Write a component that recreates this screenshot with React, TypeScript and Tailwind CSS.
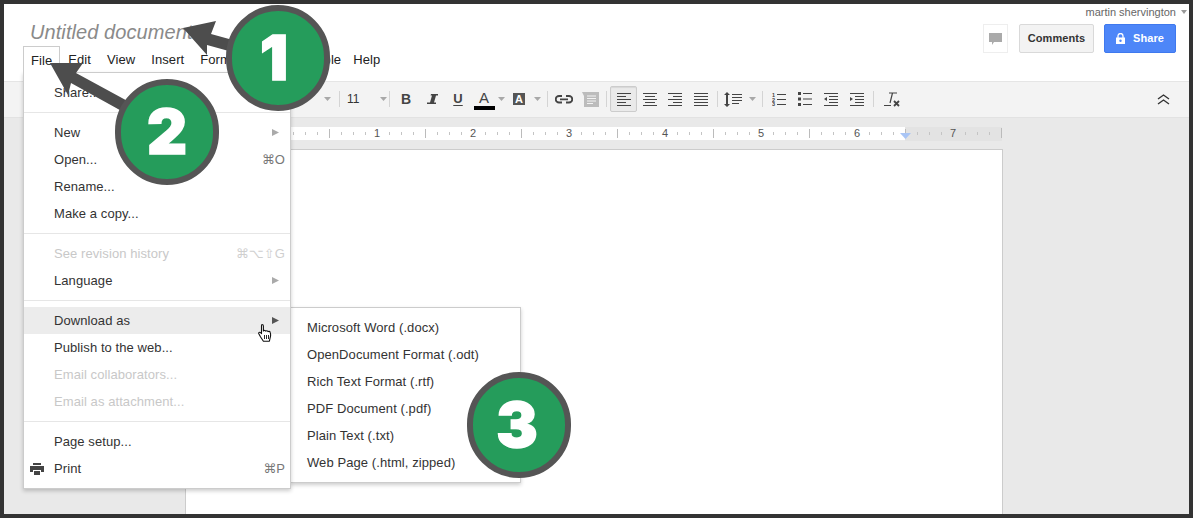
import React from "react";

const Caret = ({ w = 10, c = "#a8a8a8" }: { w?: number; c?: string }) => (
  <div className="flex items-center justify-center" style={{ width: w }}>
    <svg width="7" height="4" viewBox="0 0 7 4"><path d="M0 0h7L3.5 4z" fill={c} /></svg>
  </div>
);
const Sep = ({ className = "" }: { className?: string }) => <div className={`w-px h-[16px] bg-[#d4d4d4] shrink-0 ${className}`} />;
const Btn = ({ children, w = 26 }: { children: React.ReactNode; w?: number }) => (
  <div className="h-[26px] flex items-center justify-center shrink-0 text-[#444]" style={{ width: w }}>{children}</div>
);
const Lines = ({ rows }: { rows: [number, number][] }) => (
  <svg width="14" height="14" viewBox="0 0 14 14">
    {rows.map(([x, w], i) => <rect key={i} x={x} y={1 + i * 3} width={w} height="1" fill="#444" />)}
  </svg>
);

const Tri = ({ dark }: { dark?: boolean }) => (
  <svg width="7" height="7" viewBox="0 0 7 7" className="absolute left-[248px] top-[10px]">
    <path d="M0 0l7 3.5L0 7z" fill={dark ? "#555" : "#aaa"} />
  </svg>
);

const Row = ({ label, sc, arrow, off, hl, icon }: { label: string; sc?: string; arrow?: boolean; off?: boolean; hl?: boolean; icon?: React.ReactNode }) => (
  <div className={`relative h-[27px] flex items-center pl-[30px] pr-[5px] justify-between ${hl ? "bg-[#ececec]" : ""} ${off ? "text-[#c8c8c8]" : "text-[#333]"}`}>
    {icon}
    <span>{label}</span>
    {sc && <span className={off ? "text-[#cfcfcf]" : "text-[#777]"}>{sc}</span>}
    {arrow && <Tri dark={hl} />}
  </div>
);
const Div = () => <div className="h-px my-[6px] bg-[#e6e6e6]" />;

const Badge = ({ n, cls, inner }: { n: string; cls: string; inner: string }) => (
  <div className={`absolute z-30 w-[104px] h-[106px] rounded-full border-[6px] border-[#555] bg-[#259c5b] flex items-center justify-center text-white font-['Inter','Liberation_Sans',sans-serif] font-black text-[62px] leading-none [-webkit-text-stroke:1.5px_white] ${cls}`}>
    <span className={inner}>{n}</span>
  </div>
);

const ticks = Array.from({ length: 69 }, (_, i) => i);

export default function App() {
  return (
    <div className="relative w-[1193px] h-[518px] bg-[#333] p-[4px] overflow-hidden font-['Liberation_Sans','DejaVu_Sans',sans-serif] text-[13px] tracking-[0.08px]">
      <div className="h-full flex flex-col bg-white">
        {/* header */}
        <header className="h-[78px] shrink-0 flex justify-between border-b border-[#e5e5e5]">
          <div className="pl-[19px] pt-[16px]">
            <div className="ml-[7px] h-[24px] leading-[24px] text-[20px] italic text-[#8a8a8a]">Untitled document</div>
            <nav className="mt-[2px] flex text-[#222]">
              <div className="relative z-20 h-[27px] px-[7px] pt-[4px] bg-white border border-b-0 border-[#ccc]">File</div>
              <div className="h-[27px] px-[8px] pt-[4px]">Edit</div>
              <div className="h-[27px] px-[8px] pt-[4px]">View</div>
              <div className="h-[27px] px-[8px] pt-[4px]">Insert</div>
              <div className="h-[27px] px-[8px] pt-[4px]">Format</div>
              <div className="h-[27px] pl-[8px] pr-[13px] pt-[4px]">Tools</div>
              <div className="h-[27px] pl-[8px] pr-[4px] pt-[4px]">Table</div>
              <div className="h-[27px] px-[8px] pt-[4px]">Help</div>
            </nav>
          </div>
          <div className="pr-[2px] flex flex-col items-end">
            <div className="h-[16px] flex items-center gap-[5px] text-[11px] tracking-normal text-[#666]">
              <span>martin shervington</span>
              <svg width="6" height="4" viewBox="0 0 6 4"><path d="M0 0h6L3 4z" fill="#999" /></svg>
            </div>
            <div className="mt-[4px] mr-[11px] flex">
              <div className="w-[25px] h-[29px] border border-[#eee] flex items-center justify-center">
                <svg width="14" height="14" viewBox="0 0 14 14"><path d="M0 1h13v9H5l-2 3v-3H0z" fill="#aaa" /></svg>
              </div>
              <div className="ml-[11px] w-[75px] h-[29px] rounded-[2px] border border-[#d9d9d9] bg-[#f3f3f3] flex items-center justify-center text-[11px] font-bold text-[#333]">Comments</div>
              <div className="ml-[10px] w-[72px] h-[29px] rounded-[2px] bg-[#4d86f8] border border-[#3f79ee] flex items-center justify-center gap-[8px] text-[11px] font-bold text-white">
                <svg width="9" height="11" viewBox="0 0 9 11"><path d="M2 5V3a2.5 2.5 0 015 0v2" fill="none" stroke="#fff" strokeWidth="1.3" /><path d="M0 4.5h9V11H0z" fill="#fff" /><circle cx="4.5" cy="7.7" r="1.2" fill="#4d86f8" /></svg>
                <span>Share</span>
              </div>
            </div>
          </div>
        </header>

        {/* toolbar */}
        <div className="h-[36px] shrink-0 flex items-center pl-[318px] pb-[1px] bg-[#f3f3f3] border-b border-[#e2e2e2]">
          <Caret />
          <Sep className="ml-[7px]" />
          <div className="w-[49px] flex items-center justify-between pl-[7px] pr-[1px] text-[12px] text-[#333]"><span>11</span><Caret w={10} /></div>
          <Sep />
          <div className="ml-[3px] flex items-center">
            <Btn><span className="font-bold text-[14px]">B</span></Btn>
            <Btn>
              <svg width="11" height="10" viewBox="0 0 11 10"><path d="M4 0h7v1.5H9L7 8.5h2V10H0V8.5h3L5 1.5H3.6z" fill="#444" /></svg>
            </Btn>
            <Btn><span className="font-bold text-[13px] underline underline-offset-2">U</span></Btn>
            <Btn>
              <div className="flex flex-col items-center">
                <span className="text-[15px] leading-[14px] mt-[3px]">A</span>
                <div className="w-[21px] h-[4px] mt-[1px] bg-black" />
              </div>
            </Btn>
            <Caret w={9} />
            <Btn>
              <div className="w-[12px] h-[12px] bg-[#555] text-white font-bold text-[11px] leading-[12px] text-center">A</div>
            </Btn>
            <Caret />
          </div>
          <Sep className="ml-[5px]" />
          <div className="ml-[3px] flex items-center">
            <Btn>
              <svg width="18" height="9" viewBox="0 0 18 9" fill="none" stroke="#444" strokeWidth="1.8"><path d="M7 1H4a3.2 3.2 0 000 6.5h3M11 1h3a3.2 3.2 0 010 6.5h-3M5 4.3h8" /></svg>
            </Btn>
            <Btn>
              <svg width="17" height="15" viewBox="0 0 17 15"><path d="M2 0h15v15H2V4L0 0z" fill="#bcbcbc" /><path d="M5 4h9M5 6.5h9M5 9h9M5 11.5h6" stroke="#f3f3f3" strokeWidth="1" /></svg>
            </Btn>
          </div>
          <Sep className="ml-[3px]" />
          <div className="ml-[3px] w-[27px] h-[26px] rounded-[2px] border border-[#ccc] bg-[#eaeaea] shadow-[inset_0_1px_1px_rgba(0,0,0,0.08)] flex items-center justify-center shrink-0">
            <Lines rows={[[0, 14], [0, 9], [0, 14], [0, 9], [0, 14]]} />
          </div>
          <Btn w={25}><Lines rows={[[0, 14], [2, 10], [0, 14], [2, 10], [0, 14]]} /></Btn>
          <Btn><Lines rows={[[0, 14], [5, 9], [0, 14], [5, 9], [0, 14]]} /></Btn>
          <Btn><Lines rows={[[0, 14], [0, 14], [0, 14], [0, 14], [0, 14]]} /></Btn>
          <Sep className="ml-[3px]" />
          <Btn w={30}>
            <svg width="18" height="15" viewBox="0 0 18 15" fill="#444"><path d="M3 0l3 3H4v9h2l-3 3-3-3h2V3H0z" /><path d="M8 2h10v1H8zM8 5h10v1H8zM8 8h10v1H8zM8 11h7v1H8z" /></svg>
          </Btn>
          <Caret w={9} />
          <Sep className="ml-[5px]" />
          <div className="ml-[3px] flex items-center">
            <Btn>
              <svg width="14" height="14" viewBox="0 0 14 14" fill="#444"><text x="0" y="5" fontSize="5.5" fontWeight="700">1</text><text x="0" y="9.5" fontSize="5.5" fontWeight="700">2</text><text x="0" y="14" fontSize="5.5" fontWeight="700">3</text><path d="M5 2h9v1H5zM5 7h9v1H5zM5 12h9v1H5z" /></svg>
            </Btn>
            <Btn>
              <svg width="14" height="14" viewBox="0 0 14 14" fill="#444"><path d="M0 0h3v3H0zM0 5.5h3v3H0zM0 11h3v3H0zM5 1h9v1H5zM5 6.5h9v1H5zM5 12h9v1H5z" /></svg>
            </Btn>
            <Btn>
              <svg width="14" height="14" viewBox="0 0 14 14" fill="#444"><path d="M0 1h14v1H0zM5 4h9v1H5zM5 7h9v1H5zM5 10h9v1H5zM0 13h14v1H0zM3 5v4L0 7z" /></svg>
            </Btn>
            <Btn>
              <svg width="14" height="14" viewBox="0 0 14 14" fill="#444"><path d="M0 1h14v1H0zM5 4h9v1H5zM5 7h9v1H5zM5 10h9v1H5zM0 13h14v1H0zM0 5v4l3-2z" /></svg>
            </Btn>
          </div>
          <Sep className="ml-[3px]" />
          <Btn w={36}>
            <svg width="16" height="16" viewBox="0 0 16 16" fill="none" stroke="#444"><path d="M5 2h8M8.5 2L6 12M0 14.5h7" strokeWidth="1.2" /><path d="M10 10l5 5M15 10l-5 5" strokeWidth="1.8" /></svg>
          </Btn>
          <div className="ml-auto mr-[19px]">
            <svg width="13" height="11" viewBox="0 0 13 11" fill="none" stroke="#333" strokeWidth="1.4"><path d="M1 5l5.5-4L12 5M1 10l5.5-4L12 10" /></svg>
          </div>
        </div>

        {/* canvas */}
        <div className="flex-1 min-h-0 overflow-hidden bg-[#e9e9e9] pt-[9px]">
          <div className="ml-[182px] w-[816px] h-[14px]">
            <svg width="816" height="14" viewBox="0 0 816 14" className="block">
              <rect x="0" y="0" width="719" height="13" fill="#fff" />
              <rect x="719" y="-1" width="97" height="15" fill="#e3e3e3" />
              {ticks.map((i) => {
                const x = i * 12 - 1;
                const pos = i % 8;
                if (pos === 0) return null;
                if (pos === 4) return <rect key={i} x={x} y="2" width="1" height="9" fill="#bbb" />;
                return <rect key={i} x={x} y="5" width="1" height="3" fill="#c4c4c4" />;
              })}
              <rect x="815" y="1" width="1" height="9" fill="#bbb" />
              {[1, 2, 3, 4, 5, 6, 7].map((n) => (
                <text key={n} x={95 + n * 96} y="10" textAnchor="middle" fontSize="11" fill="#555" fontFamily="Liberation Sans">{n}</text>
              ))}
              <path d="M714 6h11l-5.5 6z" fill="#a9c5f5" />
            </svg>
          </div>
          <div className="ml-[181px] mt-[8px] w-[818px] h-[500px] bg-white border border-[#ccc]" />
        </div>
      </div>

      {/* file menu */}
      <div className="absolute z-10 left-[23px] top-[72px] w-[268px] bg-white border border-[#ccc] shadow-[0_2px_4px_rgba(0,0,0,0.2)] py-[6px]">
        <Row label="Share..." />
        <Div />
        <Row label="New" arrow />
        <Row label="Open..." sc="⌘O" />
        <Row label="Rename..." />
        <Row label="Make a copy..." />
        <Div />
        <Row label="See revision history" sc="⌘⌥⇧G" off />
        <Row label="Language" arrow />
        <Div />
        <Row label="Download as" arrow hl />
        <Row label="Publish to the web..." />
        <Row label="Email collaborators..." off />
        <Row label="Email as attachment..." off />
        <Div />
        <Row label="Page setup..." />
        <Row
          label="Print"
          sc="⌘P"
          icon={
            <svg width="14" height="12" viewBox="0 0 14 12" className="absolute left-[6px] top-[8px]" fill="#444">
              <path d="M3 0h8v2H3zM0 3h14v6h-3V7H3v2H0zM4 8h6v4H4z" />
            </svg>
          }
        />
      </div>

      {/* download submenu */}
      <div className="absolute z-[9] left-[290px] top-[307px] w-[231px] bg-white border border-[#ccc] shadow-[0_2px_4px_rgba(0,0,0,0.2)] py-[6px] text-[#333]">
        {["Microsoft Word (.docx)", "OpenDocument Format (.odt)", "Rich Text Format (.rtf)", "PDF Document (.pdf)", "Plain Text (.txt)", "Web Page (.html, zipped)"].map((t) => (
          <div key={t} className="h-[27px] flex items-center pl-[16px]">{t}</div>
        ))}
      </div>

      {/* pointer */}
      <svg width="16" height="20" viewBox="0 0 16 20" className="absolute z-20 left-[258px] top-[323px]">
        <path d="M4 1.5c.9 0 1.4.6 1.4 1.4V8c.3-.8 2-.8 2.3.2.5-.7 2-.6 2.3.4.6-.5 2-.3 2.2.8.5 1.6.5 4-.1 5.6l-.7 3.2H5.4L2.6 14 .8 10.8c-.5-1.2.8-2 1.8-1.1l.9.9V2.9c0-.8 0-1.4.5-1.4z" fill="#fff" stroke="#111" strokeWidth="1.1" strokeLinejoin="round" />
        <path d="M6.5 12v4M8.5 12v4M10.5 12v4" stroke="#111" strokeWidth="0.9" />
      </svg>

      {/* annotation arrows */}
      <svg width="1193" height="518" viewBox="0 0 1193 518" className="absolute z-20 left-0 top-0 pointer-events-none">
        <path d="M183 28L216 21L211 34L240 42L236 53L207 45L207 55z" fill="#4d4d4d" />
        <path d="M50 63L83 63L76 73L133 104L127 114L71 83L68 95z" fill="#4d4d4d" />
      </svg>

      <Badge n="1" cls="left-[226px] top-[5px]" inner="-translate-x-[4px]" />
      <Badge n="2" cls="left-[115px] top-[79px]" inner="" />
      <Badge n="3" cls="left-[467px] top-[372px]" inner="-translate-x-[2px]" />
    </div>
  );
}
